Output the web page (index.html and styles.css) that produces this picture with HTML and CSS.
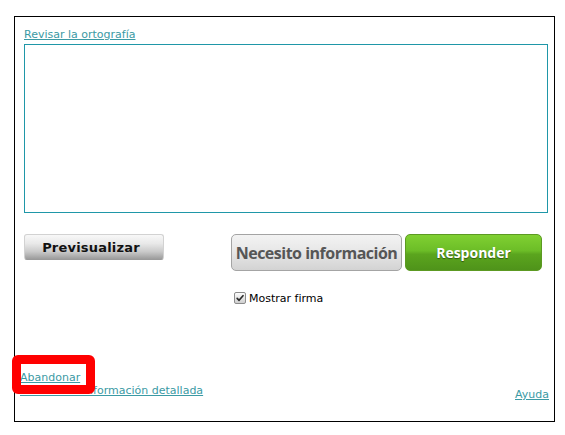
FILE: index.html
```html
<!DOCTYPE html>
<html lang="es">
<head>
<meta charset="utf-8">
<title>Responder</title>
<link rel="stylesheet" href="styles.css">
</head>
<body>
<div class="panel">
  <a class="link spell" href="#">Revisar la ortografía</a>
  <textarea class="editor"></textarea>
  <div class="actions">
    <button class="btn btn-preview">Previsualizar</button>
    <div class="main-actions">
      <div class="main-buttons">
        <button class="btn btn-info">Necesito información</button>
        <button class="btn btn-reply">Responder</button>
      </div>
      <label class="check-row">
        <span class="check"><svg viewBox="0 0 12 12" width="12" height="12"><path d="M2.6 6.4 L4.9 8.8 L9.6 3.2" fill="none" stroke="#2b2b2b" stroke-width="2" stroke-linecap="round" stroke-linejoin="round"/></svg></span>
        <span class="check-label">Mostrar firma</span>
      </label>
    </div>
  </div>
  <div class="footer">
    <div class="footer-left">
      <a class="link" href="#">Abandonar</a>
      <a class="link" href="#">Ver toda la información detallada</a>
    </div>
    <a class="link help" href="#">Ayuda</a>
  </div>
  <div class="highlight"></div>
</div>
</body>
</html>
```

FILE: styles.css
```css
html, body {
  margin: 0;
  padding: 0;
  background: #fff;
}

body {
  font-family: "DejaVu Sans", Verdana, sans-serif;
  font-size: 11px;
  color: #000;
}

.panel {
  position: relative;
  box-sizing: border-box;
  width: 541px;
  height: 406px;
  margin: 16px 0 0 14px;
  border: 1px solid #000;
  padding: 11px 6px 20px 9px;
  display: flex;
  flex-direction: column;
}

.link {
  display: block;
  color: #3b9aa4;
  text-decoration: underline;
  line-height: 13px;
  font-size: 11px;
}

.spell {
  line-height: 14px;
}

.editor {
  display: block;
  box-sizing: border-box;
  width: 524px;
  height: 169px;
  margin: 2px 0 0 0;
  padding: 0;
  border: 1px solid #1f97a8;
  resize: none;
  background: #fff;
}

.actions {
  display: flex;
  align-items: flex-start;
  margin-top: 21px;
}

.btn {
  box-sizing: border-box;
  margin: 0;
  padding: 0;
  cursor: pointer;
  display: flex;
  align-items: center;
  justify-content: center;
}

.btn-preview {
  width: 140px;
  height: 26px;
  border: 1px solid #d2d2d2;
  border-bottom-color: #9a9a9a;
  border-radius: 3px;
  background: linear-gradient(#f8f8f8 0%, #e9e9e9 35%, #c9c9c9 70%, #9c9c9c 100%);
  font-family: "DejaVu Sans", Verdana, sans-serif;
  font-weight: bold;
  font-size: 13px;
  letter-spacing: 0.2px;
  color: #111;
  padding: 1px 6px 0 0;
}

.main-actions {
  margin-left: 67px;
  display: flex;
  flex-direction: column;
}

.main-buttons {
  display: flex;
  gap: 3px;
}

.btn-info {
  width: 171px;
  height: 37px;
  border: 1px solid #a4a4a4;
  border-radius: 5px;
  background: linear-gradient(#f3f3f3 0%, #e6e6e6 50%, #d3d3d3 100%);
  font-family: "Open Sans", sans-serif;
  font-weight: bold;
  font-size: 16px;
  letter-spacing: -0.5px;
  color: #565656;
}

.btn-reply {
  width: 137px;
  height: 37px;
  border: 1px solid #5c9a22;
  border-radius: 5px;
  background: linear-gradient(#80d032 0%, #6cbd27 45%, #5ba51e 55%, #4f931a 100%);
  font-family: "Open Sans", sans-serif;
  font-weight: bold;
  font-size: 14px;
  color: #fff;
  text-shadow: 0 1px 1px rgba(0, 0, 0, 0.45);
}

.check-row {
  display: flex;
  align-items: center;
  margin: 21px 0 0 3px;
  height: 12px;
}

.check {
  box-sizing: border-box;
  width: 12px;
  height: 12px;
  border: 1px solid #8c8c8c;
  border-radius: 2px;
  background: linear-gradient(#fdfdfd, #cfcfcf);
  display: flex;
  align-items: center;
  justify-content: center;
}

.check svg {
  display: block;
}

.check-label {
  margin-left: 3px;
  line-height: 13px;
  color: #000;
}

.footer {
  margin-top: auto;
  margin-left: -4px;
  margin-right: -1px;
  display: flex;
  justify-content: space-between;
  align-items: flex-end;
}

.footer-left {
  margin-bottom: 4px;
}

.highlight {
  position: absolute;
  left: -3px;
  top: 338px;
  box-sizing: border-box;
  width: 83px;
  height: 39px;
  border: 9px solid #ff0000;
  border-radius: 6px;
  pointer-events: none;
}
```
